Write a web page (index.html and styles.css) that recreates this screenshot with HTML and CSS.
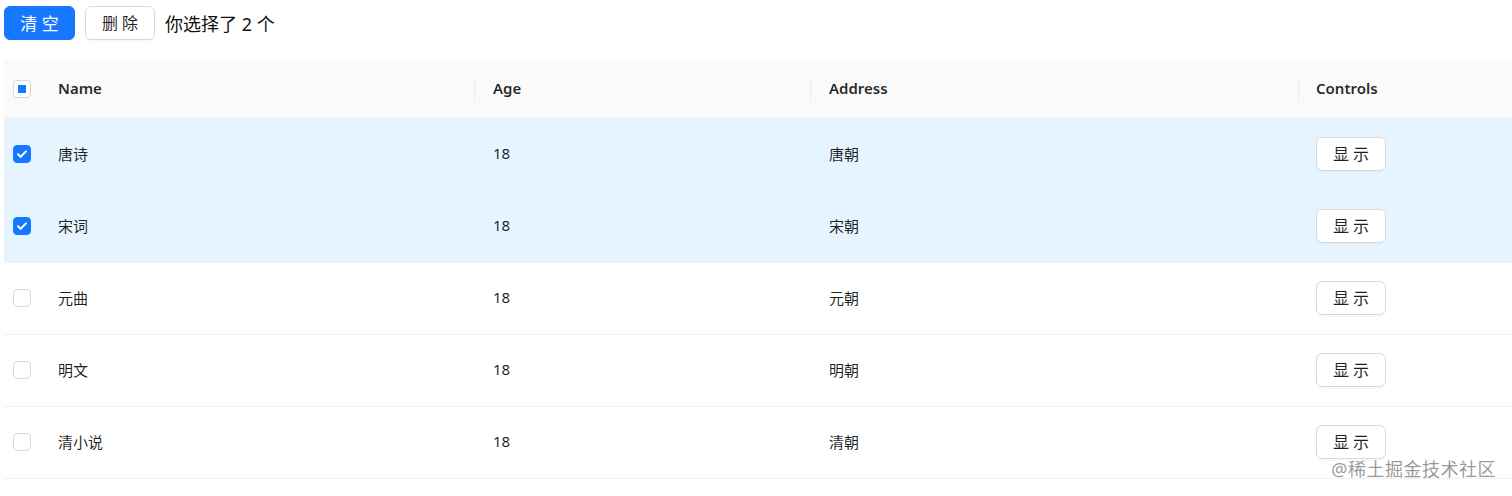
FILE: index.html
```html
<!DOCTYPE html>
<html lang="zh">
<head>
<meta charset="utf-8">
<link rel="stylesheet" href="styles.css">
</head>
<body>
<div class="page">
  <div class="toolbar">
    <button class="btn btn-primary">清 空</button>
    <button class="btn btn-default">删 除</button>
    <span class="count">你选择了 2 个</span>
  </div>
  <table class="table">
    <colgroup>
      <col class="c-sel"><col class="c-name"><col class="c-age"><col class="c-addr"><col class="c-ctrl">
    </colgroup>
    <thead>
      <tr>
        <th class="sel"><span class="cb cb-ind"></span></th>
        <th>Name</th>
        <th class="sep">Age</th>
        <th class="sep">Address</th>
        <th class="sep ctrl">Controls</th>
      </tr>
    </thead>
    <tbody>
      <tr class="selected">
        <td class="sel"><span class="cb cb-on"><svg viewBox="0 0 16 16"><path d="M4 8.2l2.6 2.6L12 5.4" fill="none" stroke="#fff" stroke-width="2" stroke-linecap="round" stroke-linejoin="round"/></svg></span></td>
        <td>唐诗</td><td>18</td><td>唐朝</td><td class="ctrl"><button class="btn btn-sm">显 示</button></td>
      </tr>
      <tr class="selected">
        <td class="sel"><span class="cb cb-on"><svg viewBox="0 0 16 16"><path d="M4 8.2l2.6 2.6L12 5.4" fill="none" stroke="#fff" stroke-width="2" stroke-linecap="round" stroke-linejoin="round"/></svg></span></td>
        <td>宋词</td><td>18</td><td>宋朝</td><td class="ctrl"><button class="btn btn-sm">显 示</button></td>
      </tr>
      <tr>
        <td class="sel"><span class="cb"></span></td>
        <td>元曲</td><td>18</td><td>元朝</td><td class="ctrl"><button class="btn btn-sm">显 示</button></td>
      </tr>
      <tr>
        <td class="sel"><span class="cb"></span></td>
        <td>明文</td><td>18</td><td>明朝</td><td class="ctrl"><button class="btn btn-sm">显 示</button></td>
      </tr>
      <tr>
        <td class="sel"><span class="cb"></span></td>
        <td>清小说</td><td>18</td><td>清朝</td><td class="ctrl"><button class="btn btn-sm">显 示</button></td>
      </tr>
    </tbody>
  </table>
  <div class="watermark">@稀土掘金技术社区</div>
</div>
</body>
</html>
```
FILE: styles.css
```css
* { box-sizing: border-box; }
html, body { margin: 0; padding: 0; background: #fff; }
body {
  font-family: "Noto Sans", "Noto Sans CJK SC", sans-serif;
  color: rgba(0,0,0,0.88);
  overflow: hidden;
}
.page {
  position: relative;
  width: 1512px;
  height: 496px;
  padding: 6px 0 0 4px;
}
.toolbar {
  display: flex;
  align-items: center;
  gap: 10px;
  height: 34px;
}
.btn {
  font-family: inherit;
  height: 34px;
  padding: 0;
  font-size: 16px;
  border-radius: 6px;
  border: 1px solid #d9d9d9;
  background: #fff;
  color: rgba(0,0,0,0.88);
  box-shadow: 0 2px 0 rgba(0,0,0,0.02);
  line-height: 1;
  white-space: nowrap;
  cursor: pointer;
}
.btn-primary {
  background: #1677ff;
  border-color: #1677ff;
  color: #fff;
  width: 71px;
  font-size: 17px;
}
.btn-default { width: 70px; }
.count {
  font-size: 18px;
  color: #111;
}
.table {
  margin-top: 20px;
  width: 1540px;
  border-collapse: collapse;
  table-layout: fixed;
  font-size: 15px;
}
.c-sel { width: 35px; }
.c-name { width: 435px; }
.c-age { width: 336px; }
.c-addr { width: 488px; }
.c-ctrl { width: 246px; }
.table th {
  background: #fafafa;
  font-weight: 600;
  text-align: left;
  height: 58px;
  padding: 0 19px 2px;
  border-bottom: 1px solid #f0f0f0;
  position: relative;
  font-size: 15px;
  color: rgba(0,0,0,0.85);
}
.table th.sep::before {
  content: "";
  position: absolute;
  left: 0;
  top: 50%;
  width: 1px;
  height: 24px;
  transform: translateY(-50%);
  background: #eeeeee;
}
.table td {
  height: 72px;
  padding: 0 19px 2px;
  border-bottom: 1px solid #f0f0f0;
  vertical-align: middle;
}
.table .ctrl { padding-left: 18px; }
.table td.ctrl { padding-bottom: 0; }
.table tr.selected td { background: #e6f4ff; }
.table .sel { padding: 0 0 0 9px; }
.cb {
  display: flex;
  align-items: center;
  justify-content: center;
  width: 18px;
  height: 18px;
  border: 1px solid #d9d9d9;
  border-radius: 4px;
  background: #fff;
}
.cb svg { width: 16px; height: 16px; }
.cb-on { background: #1677ff; border-color: #1677ff; }
.cb-ind::after {
  content: "";
  width: 8px;
  height: 8px;
  background: #1677ff;
}
.btn-sm { width: 70px; display: block; }
.watermark {
  position: absolute;
  right: 16px;
  bottom: 15px;
  font-size: 18px;
  color: rgba(120,120,120,0.75);
  letter-spacing: 0.5px;
}
```
